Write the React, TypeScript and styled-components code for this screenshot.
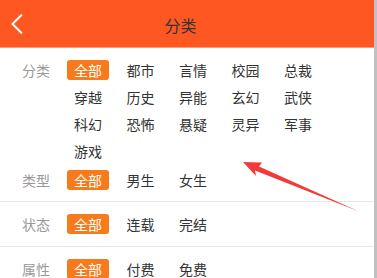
import styled, { createGlobalStyle } from 'styled-components';

const GlobalStyle = createGlobalStyle`
  html, body {
    margin: 0;
    padding: 0;
    background: #fff;
  }
  body {
    font-family: "Noto Sans CJK SC", "Noto Sans", sans-serif;
  }
  * {
    box-sizing: border-box;
  }
`;

interface FilterGroup {
  label: string;
  options: string[];
}

const groups: FilterGroup[] = [
  {
    label: '分类',
    options: [
      '全部', '都市', '言情', '校园', '总裁',
      '穿越', '历史', '异能', '玄幻', '武侠',
      '科幻', '恐怖', '悬疑', '灵异', '军事',
      '游戏',
    ],
  },
  { label: '类型', options: ['全部', '男生', '女生'] },
  { label: '状态', options: ['全部', '连载', '完结'] },
  { label: '属性', options: ['全部', '付费', '免费'] },
];

// per-section spacing: [top, bottom, divider]
const sectionSpacing: [number, number, boolean][] = [
  [12, 0, false],
  [9, 11, true],
  [12, 12, true],
  [12, 12, true],
];

export default function App() {
  return (
    <>
      <GlobalStyle />
      <Page>
        <Main>
          <Header>
            <BackButton>
              <svg width="13" height="23" viewBox="0 0 13 23">
                <polyline
                  points="11,1.5 1.5,11 11,20.5"
                  fill="none"
                  stroke="#fff"
                  strokeWidth="2"
                />
              </svg>
            </BackButton>
            <Title>分类</Title>
            <HeaderSpacer />
          </Header>
          {groups.map((group, i) => {
            const [top, bottom, divided] = sectionSpacing[i];
            return (
              <Section key={group.label} $top={top} $bottom={bottom} $divided={divided}>
                <Label>{group.label}</Label>
                <Options>
                  {group.options.map((opt, j) => (
                    <Option key={opt} $active={j === 0}>
                      {opt}
                    </Option>
                  ))}
                </Options>
              </Section>
            );
          })}
        </Main>
        <Scrollbar />
        <Annotation width="377" height="278" viewBox="0 0 377 278">
          <polygon
            points="243,162 262,162.5 259,166.5 359,211.5 255,170.5 256,176"
            fill="#f33a3a"
          />
        </Annotation>
      </Page>
    </>
  );
}

const Page = styled.div`
  position: relative;
  display: flex;
  width: 377px;
  height: 278px;
  overflow: hidden;
`;

const Main = styled.div`
  flex: 1;
  min-width: 0;
`;

const Scrollbar = styled.div`
  width: 3px;
  background-color: #c1c1c1;
`;

const Header = styled.div`
  height: 48px;
  display: flex;
  align-items: center;
  background-color: #ff5722;
  border-bottom: 1px solid #ff9b7a;
`;

const BackButton = styled.div`
  width: 36px;
  height: 100%;
  display: flex;
  align-items: center;
  padding-left: 11px;
  padding-top: 1px;
`;

const Title = styled.div`
  flex: 1;
  text-align: center;
  color: #333;
  font-size: 16px;
  padding-top: 2px;
`;

const HeaderSpacer = styled.div`
  width: 49px;
`;

const Section = styled.div<{ $top: number; $bottom: number; $divided: boolean }>`
  display: flex;
  align-items: flex-start;
  padding: ${({ $top, $bottom }) => `${$top}px 0 ${$bottom}px 22px`};
  border-bottom: ${({ $divided }) => ($divided ? '1px solid #e8e8e8' : 'none')};
`;

const Label = styled.div`
  width: 45px;
  flex-shrink: 0;
  font-size: 14px;
  line-height: 20px;
  color: #999;
`;

const Options = styled.div`
  display: flex;
  flex-wrap: wrap;
  width: 256px;
  column-gap: 10.5px;
  row-gap: 7px;
`;

const Option = styled.div<{ $active: boolean }>`
  width: 42px;
  height: 20px;
  line-height: 20px;
  text-align: center;
  font-size: 14px;
  border-radius: 3px;
  color: ${({ $active }) => ($active ? '#fff' : '#333')};
  background-color: ${({ $active }) => ($active ? '#f77a1c' : 'transparent')};
`;

const Annotation = styled.svg`
  position: absolute;
  left: 0;
  top: 0;
  pointer-events: none;
`;
